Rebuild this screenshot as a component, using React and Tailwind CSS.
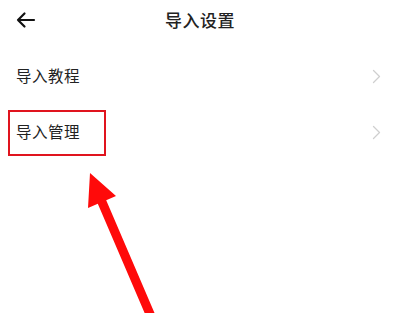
import React from "react";

function Chevron() {
    return (
        <svg width="9" height="15" viewBox="0 0 9 15" fill="none">
            <path d="M1.5 1.5 L7.5 7.5 L1.5 13.5" stroke="#cfcfcf" strokeWidth="1.3" strokeLinecap="round" strokeLinejoin="round" />
        </svg>
    );
}

function Row({ label, highlight }) {
    return (
        <div className="relative flex items-center justify-between h-14 pl-4 pr-[19px]">
            <span className="text-[15.5px] text-[#222] tracking-[0.5px]">{label}</span>
            <Chevron />
            {highlight && (
                <div className="absolute left-2 top-[6px] w-[98px] h-[46px] border-2 border-[#e0141e]" />
            )}
        </div>
    );
}

export default function App() {
    return (
        <div
            className="relative w-[400px] h-[313px] overflow-hidden bg-white"
            style={{ fontFamily: '"Noto Sans CJK SC", "Noto Sans", sans-serif' }}
        >
            <div className="relative flex items-center justify-center h-10">
                <svg className="absolute left-4 top-[11px]" width="20" height="18" viewBox="0 0 20 18" fill="none">
                    <path d="M2 9 H18 M2 9 L8.5 2.5 M2 9 L8.5 15.5" stroke="#111" strokeWidth="2.2" strokeLinecap="round" strokeLinejoin="round" />
                </svg>
                <h1 className="text-[17px] font-medium text-[#222] tracking-[0.5px]">导入设置</h1>
            </div>
            <div className="pt-2">
                <Row label="导入教程" />
                <Row label="导入管理" highlight />
            </div>
            <svg className="absolute inset-0 pointer-events-none" width="400" height="313" viewBox="0 0 400 313">
                <polygon
                    points="90,173 116,196 106.2,200.2 161.8,330 151.9,330 97.8,203.8 88,208"
                    fill="#ff0a0a"
                />
            </svg>
        </div>
    );
}
